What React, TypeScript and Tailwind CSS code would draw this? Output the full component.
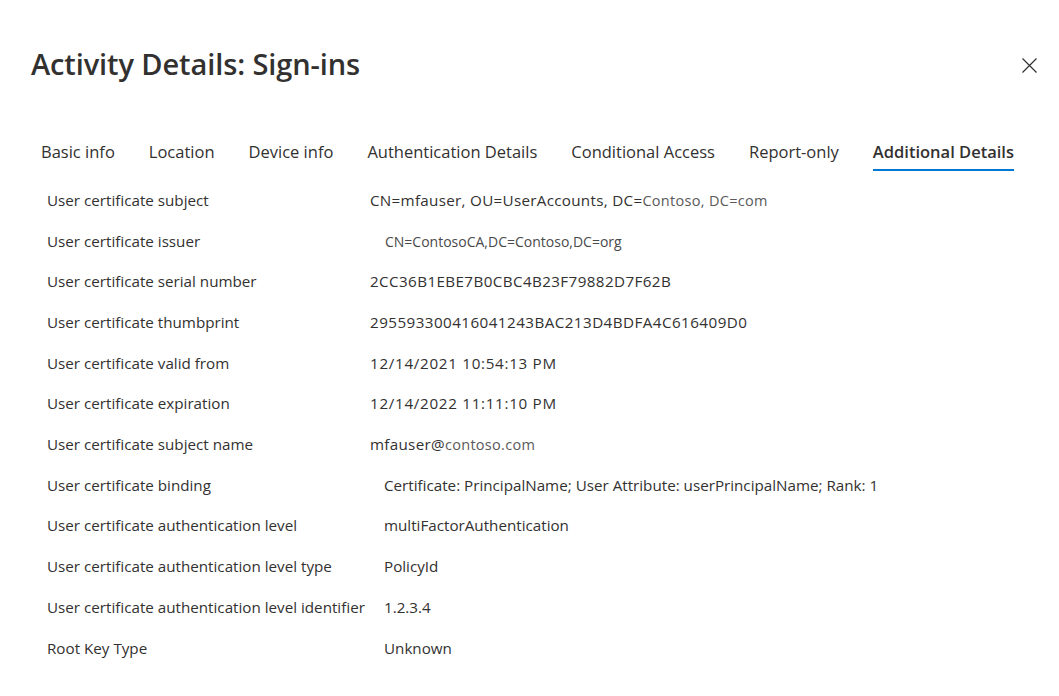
const tabs = [
  'Basic info',
  'Location',
  'Device info',
  'Authentication Details',
  'Conditional Access',
  'Report-only',
  'Additional Details',
];

type Row = { label: string; value: React.ReactNode; shifted?: boolean };

const rows: Row[] = [
  {
    label: 'User certificate subject',
    value: (
      <span className="tracking-[0.3px]">
        CN=mfauser, OU=UserAccounts, DC=<span className="text-[#5a5a5a] text-[14.5px]">Contoso, DC=com</span>
      </span>
    ),
  },
  {
    label: 'User certificate issuer',
    value: <span className="pl-[15px] text-[14px] text-[#4a4a4a]">CN=ContosoCA,DC=Contoso,DC=org</span>,
  },
  { label: 'User certificate serial number', value: <span className="tracking-[0.4px]">2CC36B1EBE7B0CBC4B23F79882D7F62B</span> },
  { label: 'User certificate thumbprint', value: <span className="tracking-[0.45px]">295593300416041243BAC213D4BDFA4C616409D0</span> },
  { label: 'User certificate valid from', value: <span className="tracking-[0.7px]">12/14/2021 10:54:13 PM</span> },
  { label: 'User certificate expiration', value: <span className="tracking-[0.7px]">12/14/2022 11:11:10 PM</span> },
  {
    label: 'User certificate subject name',
    value: (
      <span className="tracking-[0.3px]">
        mfauser@<span className="text-[#5a5a5a] text-[14.5px]">contoso.com</span>
      </span>
    ),
  },
  {
    label: 'User certificate binding',
    value: 'Certificate: PrincipalName; User Attribute: userPrincipalName; Rank: 1',
    shifted: true,
  },
  { label: 'User certificate authentication level', value: 'multiFactorAuthentication', shifted: true },
  { label: 'User certificate authentication level type', value: 'PolicyId', shifted: true },
  { label: 'User certificate authentication level identifier', value: '1.2.3.4', shifted: true },
  { label: 'Root Key Type', value: 'Unknown', shifted: true },
];

export default function App() {
  return (
    <div className="w-[1059px] h-[696px] bg-white text-[#323130] overflow-hidden font-['Open_Sans',sans-serif]">
      {/* Header */}
      <div className="flex items-start justify-between pl-[31px] pr-[22px] pt-[44px]">
        <h1 className="text-[29px] leading-[40px] font-semibold tracking-[-0.1px]">Activity Details: Sign-ins</h1>
        <button className="mt-[14px] text-[#323130]">
          <svg width="15" height="15" viewBox="0 0 15 15" fill="none" stroke="currentColor" strokeWidth="1.2">
            <path d="M0.5 0.5L14.5 14.5M14.5 0.5L0.5 14.5" />
          </svg>
        </button>
      </div>

      {/* Tabs */}
      <div className="flex gap-[34px] pl-[41px] mt-[55px] text-[16.5px]">
        {tabs.map((t) => {
          const active = t === 'Additional Details';
          return (
            <div key={t} className="flex flex-col">
              <span className={`leading-[26px] ${active ? 'font-semibold' : ''}`}>{t}</span>
              <div className={`mt-[4px] h-[2px] ${active ? 'bg-[#0078d4]' : 'bg-transparent'}`} />
            </div>
          );
        })}
      </div>

      {/* Details */}
      <div className="pl-[47px] pt-[9px] text-[15.2px]">
        {rows.map((r) => (
          <div key={r.label} className="grid grid-cols-[323px_1fr] h-[40.7px] items-center">
            <span>{r.label}</span>
            <span className={r.shifted ? 'pl-[14px]' : ''}>{r.value}</span>
          </div>
        ))}
      </div>
    </div>
  );
}
